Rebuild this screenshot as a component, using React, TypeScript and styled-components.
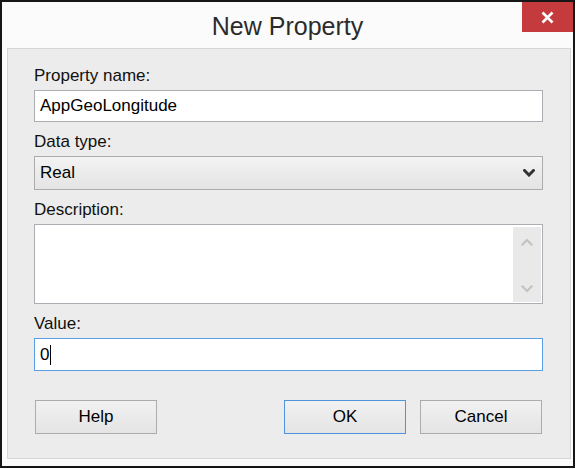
import React from "react";
import styled, { createGlobalStyle } from "styled-components";

const GlobalStyle = createGlobalStyle`
  html, body { margin: 0; padding: 0; background: #ffffff; }
  body { font-family: "Liberation Sans", Arial, sans-serif; }
  * { box-sizing: border-box; }
`;

const FONT = `"Liberation Sans", Arial, sans-serif`;

const Window = styled.div`
  width: 575px;
  height: 468px;
  border: 2px solid #161616;
  background: #fbfbfb;
  display: flex;
  flex-direction: column;
`;

const TitleBar = styled.div`
  height: 46px;
  flex: none;
  display: grid;
  grid-template-columns: 1fr auto 1fr;
  align-items: start;
`;

const Title = styled.h1`
  grid-column: 2;
  margin: 0;
  padding-top: 9px;
  font-family: ${FONT};
  font-weight: normal;
  font-size: 25px;
  line-height: 30px;
  color: #2b2b2b;
  white-space: nowrap;
`;

const CloseButton = styled.button`
  grid-column: 3;
  justify-self: end;
  width: 51px;
  height: 30px;
  border: none;
  padding: 0;
  background: #c43a3d;
  display: flex;
  align-items: center;
  justify-content: center;
`;

const Frame = styled.div`
  flex: 1;
  display: flex;
  padding: 0 2px 7px 5px;
`;

const Client = styled.div`
  flex: 1;
  display: flex;
  flex-direction: column;
  background: #ececec;
  border: 1px solid #d7d7d7;
  padding: 17px 27px 0 26px;
`;

const Field = styled.div<{ $first?: boolean }>`
  display: flex;
  flex-direction: column;
  gap: 4px;
  margin-top: ${(p) => (p.$first ? 0 : 10)}px;
`;

const Label = styled.label`
  font-family: ${FONT};
  font-size: 17px;
  line-height: 20px;
  color: #111111;
`;

const TextBox = styled.div<{ $focused?: boolean; $h: number }>`
  height: ${(p) => p.$h}px;
  background: #ffffff;
  border: 1px solid ${(p) => (p.$focused ? "#5a9fe6" : "#abadb3")};
  display: flex;
  align-items: center;
  padding: 0 5px;
  font-family: ${FONT};
  font-size: 17px;
  color: #000000;
`;

const Caret = styled.span`
  display: inline-block;
  width: 1px;
  height: 20px;
  margin-left: 1px;
  background: #000000;
`;

const Select = styled.div`
  height: 34px;
  border: 1px solid #acacac;
  background: linear-gradient(#f3f3f3, #e4e4e4);
  display: flex;
  align-items: center;
  justify-content: space-between;
  padding: 0 7px 0 5px;
  font-family: ${FONT};
  font-size: 17px;
  color: #000000;
`;

const Memo = styled.div`
  height: 80px;
  background: #ffffff;
  border: 1px solid #abadb3;
  display: flex;
`;

const MemoText = styled.div`
  flex: 1;
`;

const ScrollTrack = styled.div`
  width: 28px;
  margin: 2px 1px 1px 0;
  background: #e9e9e9;
  display: flex;
  flex-direction: column;
  justify-content: space-between;
  align-items: center;
  padding: 11px 0 9px;
`;

const ButtonRow = styled.div`
  display: flex;
  justify-content: space-between;
  margin-top: 29px;
  padding: 0 1px;
`;

const ButtonGroup = styled.div`
  display: flex;
  gap: 14px;
`;

const Button = styled.button<{ $default?: boolean }>`
  width: 122px;
  height: 34px;
  padding: 0;
  border: 1px solid ${(p) => (p.$default ? "#4f93dc" : "#acacac")};
  background: linear-gradient(#f1f1f1, #e4e4e4);
  font-family: ${FONT};
  font-size: 17px;
  color: #000000;
`;

const Chevron = ({ up, color, w }: { up?: boolean; color: string; w: number }) => (
  <svg width="12" height="8" viewBox="0 0 12 8">
    <path
      d={up ? "M1.5 6.5 L6 2 L10.5 6.5" : "M1.5 1.5 L6 6 L10.5 1.5"}
      fill="none"
      stroke={color}
      strokeWidth={w}
      strokeLinecap="square"
    />
  </svg>
);

export default function App() {
  return (
    <>
      <GlobalStyle />
      <Window>
        <TitleBar>
          <Title>New Property</Title>
          <CloseButton aria-label="Close">
            <svg width="13" height="13" viewBox="0 0 13 13">
              <path d="M1.5 1.5 L11.5 11.5 M11.5 1.5 L1.5 11.5" stroke="#ffffff" strokeWidth="2.6" />
            </svg>
          </CloseButton>
        </TitleBar>
        <Frame>
          <Client>
            <Field $first>
              <Label>Property name:</Label>
              <TextBox $h={32}>AppGeoLongitude</TextBox>
            </Field>
            <Field>
              <Label>Data type:</Label>
              <Select>
                <span>Real</span>
                <Chevron color="#333333" w={3} />
              </Select>
            </Field>
            <Field>
              <Label>Description:</Label>
              <Memo>
                <MemoText />
                <ScrollTrack>
                  <Chevron up color="#c3c3c3" w={2.2} />
                  <Chevron color="#c3c3c3" w={2.2} />
                </ScrollTrack>
              </Memo>
            </Field>
            <Field>
              <Label>Value:</Label>
              <TextBox $h={33} $focused>
                0<Caret />
              </TextBox>
            </Field>
            <ButtonRow>
              <Button>Help</Button>
              <ButtonGroup>
                <Button $default>OK</Button>
                <Button>Cancel</Button>
              </ButtonGroup>
            </ButtonRow>
          </Client>
        </Frame>
      </Window>
    </>
  );
}
